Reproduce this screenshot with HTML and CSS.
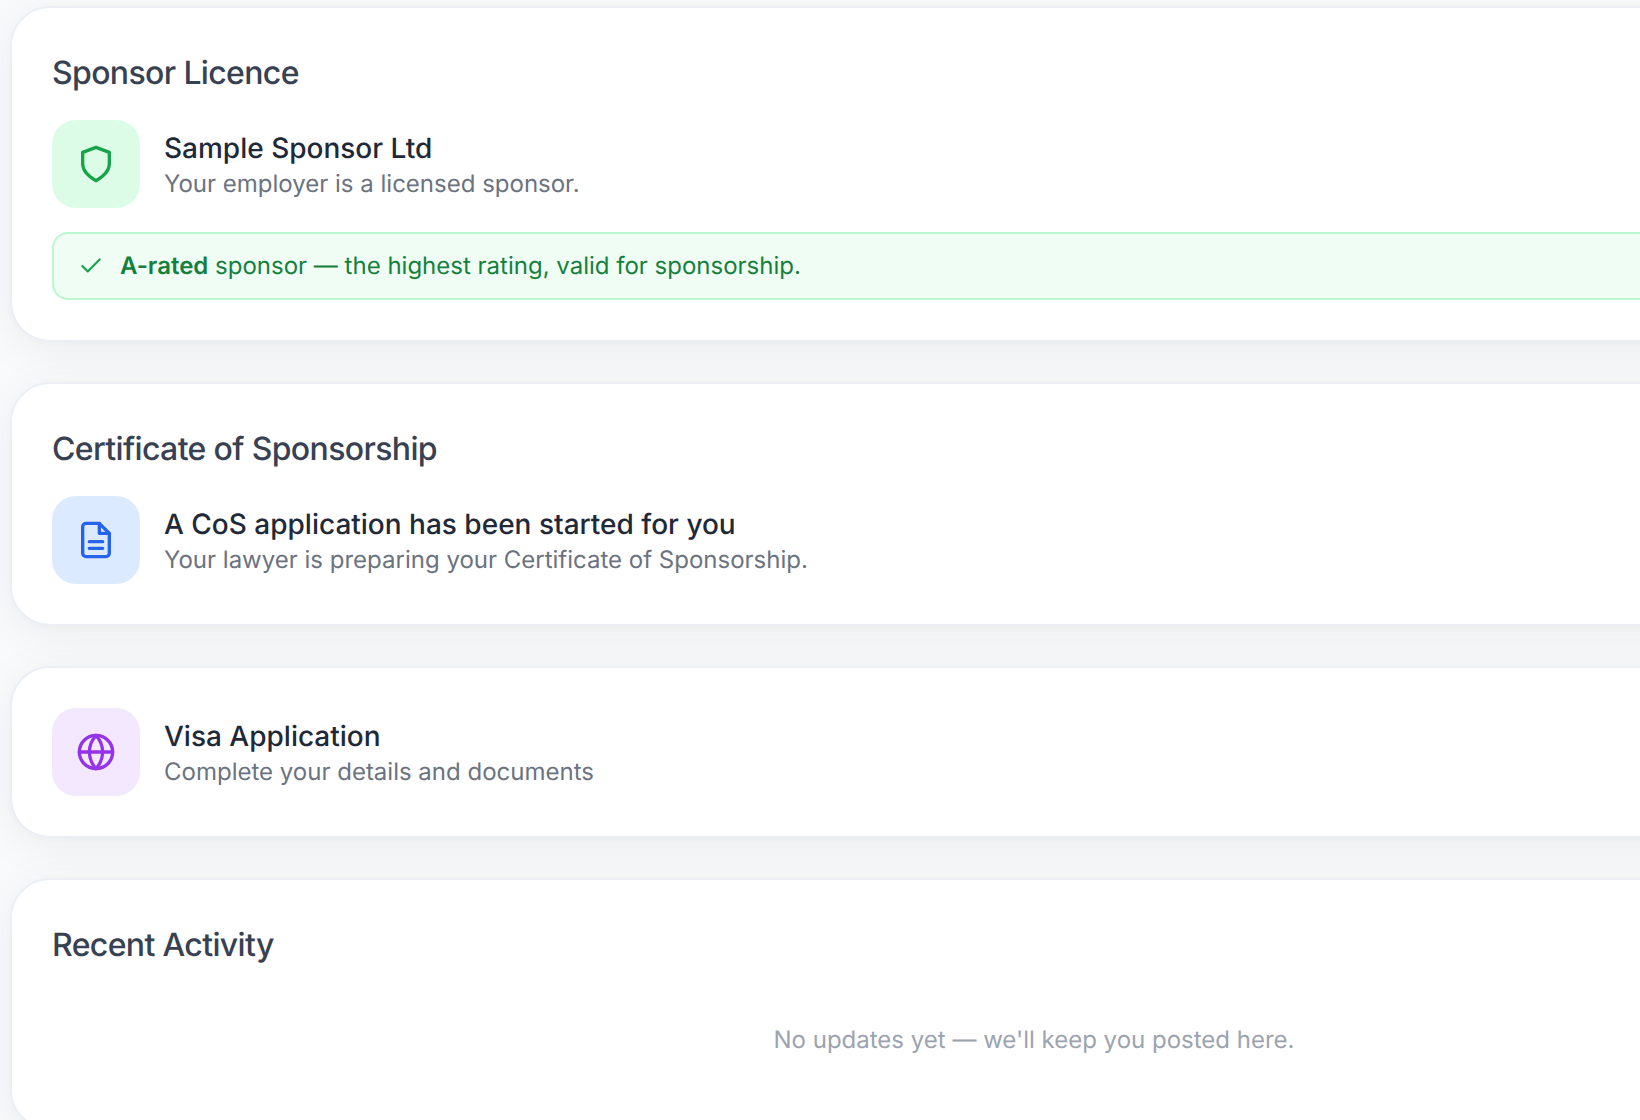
FILE: index.html
```html
<!DOCTYPE html>
<html lang="en">
<head>
  <meta charset="UTF-8">
  <meta name="viewport" content="width=device-width, initial-scale=1.0">
  <title>Sponsorship overview</title>
  <link rel="stylesheet" href="styles.css">
</head>
<body>
  <main class="overview">
    <section class="card">
      <h2 class="card-title">Sponsor Licence</h2>
      <div class="item">
        <div class="item-icon green">
          <svg viewBox="0 0 24 24"><path d="M12 22s8-4 8-10V5l-8-3-8 3v7c0 6 8 10 8 10z"/></svg>
        </div>
        <div class="item-text">
          <h3>Sample Sponsor Ltd</h3>
          <p>Your employer is a licensed sponsor.</p>
        </div>
      </div>
      <div class="notice">
        <svg viewBox="0 0 24 24"><path d="M20 6L9 17l-5-5"/></svg>
        <p><strong>A-rated</strong> sponsor — the highest rating, valid for sponsorship.</p>
      </div>
    </section>

    <section class="card">
      <h2 class="card-title">Certificate of Sponsorship</h2>
      <div class="item">
        <div class="item-icon blue">
          <svg viewBox="0 0 24 24"><path d="M14 2H6a2 2 0 0 0-2 2v16a2 2 0 0 0 2 2h12a2 2 0 0 0 2-2V8z"/><path d="M14 2v6h6M8 13h8M8 17h8"/></svg>
        </div>
        <div class="item-text">
          <h3>A CoS application has been started for you</h3>
          <p>Your lawyer is preparing your Certificate of Sponsorship.</p>
        </div>
      </div>
    </section>

    <section class="card">
      <div class="item">
        <div class="item-icon purple">
          <svg viewBox="0 0 24 24"><circle cx="12" cy="12" r="10"/><path d="M2 12h20M12 2a15.300 15.300 0 0 1 4 10 15.300 15.300 0 0 1-4 10 15.300 15.300 0 0 1-4-10 15.300 15.300 0 0 1 4-10z"/></svg>
        </div>
        <div class="item-text">
          <h3>Visa Application</h3>
          <p>Complete your details and documents</p>
        </div>
      </div>
    </section>

    <section class="card">
      <h2 class="card-title">Recent Activity</h2>
      <p class="empty">No updates yet — we'll keep you posted here.</p>
    </section>
  </main>
</body>
</html>
```
FILE: styles.css
```css
* {
  box-sizing: border-box;
}
html {
  overflow-x: hidden;
}
body {
  margin: 0;
  background-color: #f9fafb;
  font-family: Inter, sans-serif;
  font-size: 24px;
  line-height: 32px;
  color: #1f2937;
  text-rendering: geometricPrecision;
}
h2,
h3,
p {
  margin: 0;
}
svg {
  fill: none;
  stroke: currentColor;
  stroke-width: 2;
  stroke-linecap: round;
  stroke-linejoin: round;
}

/* the cards run on past the right edge of the window */
.overview {
  display: flex;
  flex-direction: column;
  gap: 40px;
  width: calc(100% + 418px);
  padding: 6px 0 40px 10px;
}
.card {
  padding: 40px;
  background-color: white;
  border: 2px solid #eceef6;
  border-radius: 40px;
  box-shadow: 0 2px 6px rgba(0, 0, 0, 0.02), 0 8px 48px rgba(0, 0, 0, 0.06);
}
.card-title {
  margin-bottom: 22px;
  font-size: 32px;
  line-height: 50px;
  font-weight: 500;
  letter-spacing: -0.02em;
  color: #374151;
}

.item {
  display: flex;
  align-items: center;
  gap: 24px;
}
.item-icon {
  display: flex;
  align-items: center;
  justify-content: center;
  width: 88px;
  height: 88px;
  border-radius: 24px;
}
.item-icon svg {
  width: 40px;
  height: 40px;
}
.green {
  background-color: #dcfce7;
  color: #16a34a;
}
.blue {
  background-color: #dbeafe;
  color: #2563eb;
}
.purple {
  background-color: #f3e8ff;
  color: #9333ea;
}
.item-text h3 {
  font-size: 28px;
  line-height: 40px;
  font-weight: 500;
}
.item-text p {
  color: #6b7280;
}

.notice {
  display: flex;
  align-items: center;
  gap: 16px;
  margin-top: 24px;
  padding: 16px 24px;
  background-color: #f0fdf4;
  border: 2px solid #bbf7d0;
  border-radius: 16px;
  color: #15803d;
}
.notice svg {
  width: 26px;
  height: 26px;
  color: #16a34a;
}
.notice strong {
  font-weight: 600;
}

.empty {
  padding: 32px 0;
  text-align: center;
  color: #9ca3af;
}
```
